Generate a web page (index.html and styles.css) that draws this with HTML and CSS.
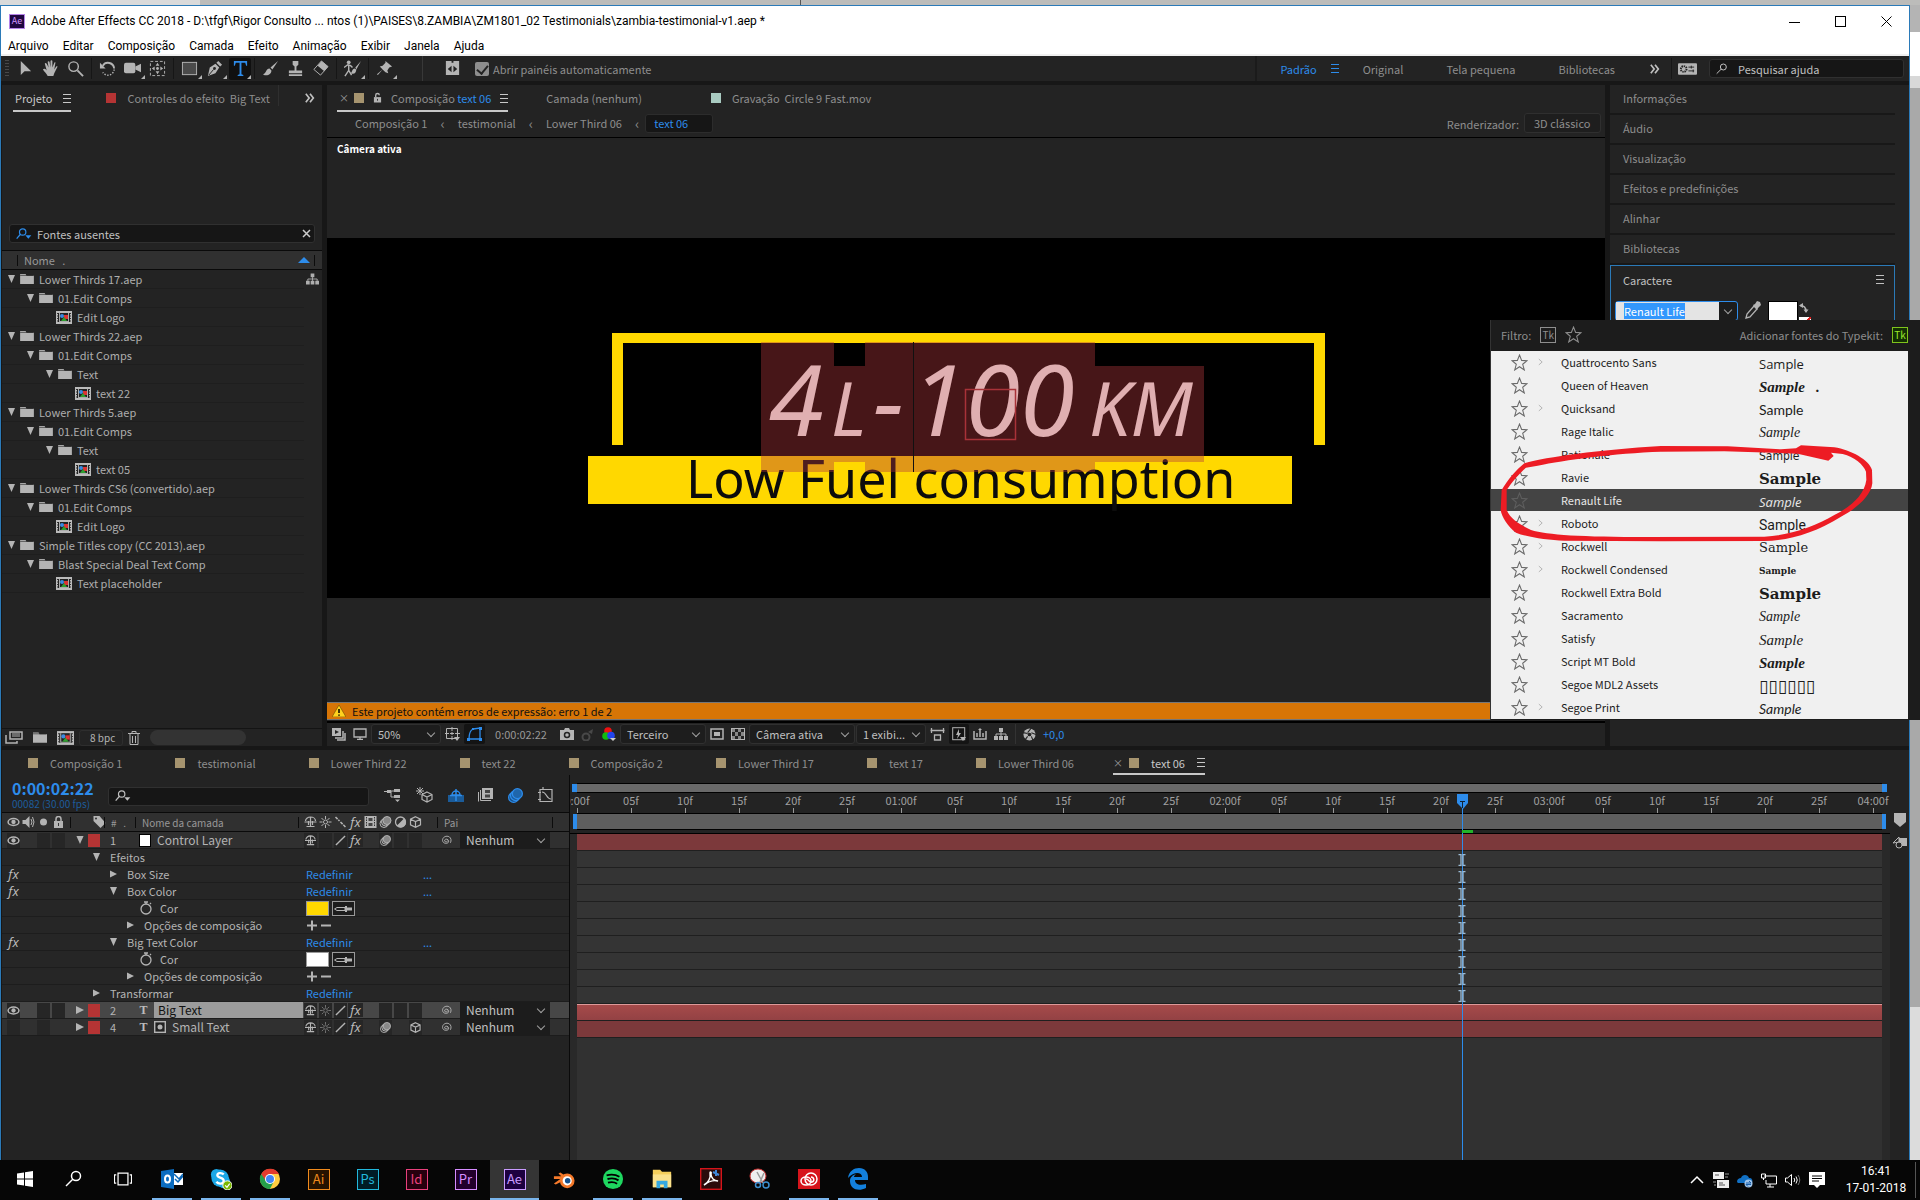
FILE: index.html
```html
<!DOCTYPE html>
<html lang="pt">
<head>
<meta charset="utf-8">
<title>Adobe After Effects CC 2018</title>
<link rel="stylesheet" href="styles.css">
</head>
<body>
<svg class="sprite" aria-hidden="true">
  <symbol id="arrow" viewBox="0 0 18 18"><path d="M4 1v15l4-4h7z" fill="currentColor"/></symbol>
  <symbol id="hand" viewBox="0 0 18 18"><path d="M6 17c-1-3-4-5-5-7 1-1 2-1 4 1L3 4c0-1 1-1 2 0l2 4-1-6c0-1 2-1 2 0l1 6V1c0-1 2-1 2 0v7l2-5c0-1 2-1 1 1l-1 6 2-3c1-1 2 0 1 1l-3 6-1 3z" fill="currentColor"/></symbol>
  <symbol id="lens" viewBox="0 0 18 18"><g fill="none" stroke="currentColor"><circle cx="7" cy="7" r="5" stroke-width="1.5"/><path d="M11 11l6 6" stroke-width="2"/></g></symbol>
  <symbol id="find" viewBox="0 0 18 18"><g fill="none" stroke="currentColor" stroke-width="1.5"><circle cx="11" cy="6" r="4.5"/><path d="M8 9l-7 7"/></g></symbol>
  <symbol id="findmenu" viewBox="0 0 24 18"><g fill="none" stroke="currentColor" stroke-width="1.8"><circle cx="10" cy="6" r="4.8"/><path d="M7 9l-6 7"/></g><path d="M14 11h9l-4.500 5z" fill="currentColor"/></symbol>
  <symbol id="rotate" viewBox="0 0 18 18"><path d="M4 6a6.500 6.500 0 0 1 12 3" fill="none" stroke="currentColor" stroke-width="2"/><path d="M16 10a6.500 6.500 0 0 1-12 3" fill="none" stroke="currentColor" stroke-dasharray="1.500 1.500" stroke-width="1.500"/><path d="M1 3v6h6z" fill="currentColor"/></symbol>
  <symbol id="cam" viewBox="0 0 18 18"><rect x="0" y="3" width="12" height="11" rx="2" fill="currentColor"/><path d="M12 7l6-3v9l-6-3z" fill="currentColor"/></symbol>
  <symbol id="pan" viewBox="0 0 18 18"><rect x="1.500" y="1.500" width="15" height="15" fill="none" stroke="currentColor" stroke-dasharray="3 2"/><path d="M9 3l2 3H7zM9 15l2-3H7zM3 9l3-2v4zM15 9l-3-2v4z" fill="currentColor"/><circle cx="9" cy="9" r="1.500" fill="currentColor"/></symbol>
  <symbol id="rect" viewBox="0 0 18 18"><rect x="1.500" y="2.500" width="15" height="13" fill="#4b4b4b" stroke="currentColor"/></symbol>
  <symbol id="pen" viewBox="0 0 18 18"><path d="M2 17l2-9 6-4 4 4-4 6zM11 3l2-2 4 4-2 2z" fill="currentColor"/><path d="M3 16l5-6" stroke="#232323"/><circle cx="9" cy="9" r="1.500" fill="#232323"/></symbol>
  <symbol id="type" viewBox="0 0 18 18"><path d="M2 1h14v5h-1l-1-3h-4v12l2 1v1H6v-1l2-1V3H4L3 6H2z" fill="currentColor"/></symbol>
  <symbol id="brush" viewBox="0 0 18 18"><path d="M17 1L9 8l2 2zM8 9c-4 0-3 5-7 6 4 3 9 0 9-4z" fill="currentColor"/></symbol>
  <symbol id="stamp" viewBox="0 0 18 18"><path d="M6 1h6v4l-2 2v4h6v3H2v-3h6V7L6 5zM2 15h14v2H2z" fill="currentColor"/></symbol>
  <symbol id="eraser" viewBox="0 0 18 18"><path d="M10 1l7 6-8 9-7-6z" fill="none" stroke="currentColor"/><path d="M10 1l7 6-4 5-7-6z" fill="currentColor"/></symbol>
  <symbol id="roto" viewBox="0 0 18 18"><circle cx="5" cy="2.500" r="2" fill="currentColor"/><path d="M0 8l4-3 3 1 2 2M5 6v5l-4 6M5 11l3 5" fill="none" stroke="currentColor" stroke-width="1.500"/><path d="M18 1l-6 7 1 2zM11 9c-3 1-2 4-4 5 4 2 6-1 6-4z" fill="currentColor"/></symbol>
  <symbol id="pin" viewBox="0 0 18 18"><path d="M10 1l7 6-3 1-2 3 1 3-3-1-3-3-5 6-1-1 6-5-3-3 3-1 3-3z" fill="currentColor"/></symbol>
  <symbol id="dock" viewBox="0 0 18 18"><path d="M2 1h6v2h2V1h6v15H2z" fill="currentColor"/><path d="M8 6v7L4 9.500zM10 6v7l4-3.500z" fill="#232323"/></symbol>
  <symbol id="more" viewBox="0 0 12 12"><path d="M1 1l4 5-4 5M6 1l4 5-4 5" fill="none" stroke="currentColor" stroke-width="2"/></symbol>
  <symbol id="burger" viewBox="0 0 8 9"><path d="M0 .5h8M0 4.500h8M0 8.500h8" stroke="currentColor"/></symbol>
  <symbol id="sync" viewBox="0 0 20 12"><rect width="20" height="12" rx="1" fill="currentColor"/><circle cx="6" cy="6" r="3" fill="none" stroke="#232323" stroke-width="2" stroke-dasharray="1.500 .8"/><path d="M11 4h6M14 2.500v3M11 8h6M16 6.500v3" stroke="#232323"/></symbol>
  <symbol id="openlock" viewBox="0 0 10 12"><path d="M1 5h8v6H1z" fill="currentColor"/><path d="M3 5V3a2 2 0 0 1 4 0" fill="none" stroke="currentColor" stroke-width="1.500"/><path d="M5 7v2" stroke="#232323"/></symbol>
  <symbol id="folder" viewBox="0 0 15 12"><path d="M0 0h6l1 2H0zM0 2h15v9H0z" fill="currentColor"/><path d="M0 1.500h14" stroke="#232323" stroke-width=".7"/></symbol>
  <symbol id="comp" viewBox="0 0 16 13"><rect x="1" y="1" width="14" height="11" fill="none" stroke="#bbb" stroke-width="2"/><path d="M1.500 2v10M14.500 2v10" stroke="#333" stroke-dasharray="1 1.500"/><rect x="3" y="2" width="10" height="9" fill="#aaa"/><rect x="4" y="2" width="8" height="8" fill="#222"/><circle cx="6" cy="5" r="2" fill="#3b8be0"/><rect x="8" y="4" width="4" height="4" fill="#d33"/><path d="M8 6l3 4H5z" fill="#2f9e2f"/></symbol>
  <symbol id="tree" viewBox="0 0 14 12"><path d="M5 0h4v4H5zM0 8h4v4H0zM5 8h4v4H5zM10 8h4v4h-4z" fill="currentColor"/><path d="M7 4v4M2 8V6h10v2" fill="none" stroke="currentColor"/></symbol>
  <symbol id="down" viewBox="0 0 8 9"><path d="M0 0h8L4 9z" fill="currentColor"/></symbol>
  <symbol id="right" viewBox="0 0 8 8"><path d="M0 0l8 4-8 4z" fill="currentColor"/></symbol>
  <symbol id="reels" viewBox="0 0 18 13"><path d="M5 1h12v7H5zM1 4v8h11v-2" fill="none" stroke="currentColor" stroke-width="1.500"/><path d="M7 3h8M7 5h8" stroke="currentColor"/></symbol>
  <symbol id="trash" viewBox="0 0 12 14"><path d="M0 2.500h12M4 2V.5h4V2M2 3v10.500h8V3M4.500 5v7M7.500 5v7" fill="none" stroke="currentColor"/></symbol>
  <symbol id="warn" viewBox="0 0 14 12"><path d="M7 0l7 12H0z" fill="#ffd21e" stroke="#6a4a00" stroke-width=".6"/><path d="M7 4v4M7 9.500v1.200" stroke="#000" stroke-width="1.500"/></symbol>
  <symbol id="views" viewBox="0 0 14 13"><path d="M0 0h9v8H0z" fill="currentColor"/><path d="M3 2l4 2-4 2z" fill="#232323"/><path d="M11 3v7H3M13 5v7H5" fill="none" stroke="currentColor" stroke-width="1.500"/></symbol>
  <symbol id="monitor" viewBox="0 0 14 12"><path d="M1 1h12v8H1zM7 9v2M4 11.500h6" fill="none" stroke="currentColor" stroke-width="1.300"/></symbol>
  <symbol id="grid" viewBox="0 0 15 14"><path d="M1.500 1.500h11v10h-11zM7 0v4M7 9v4M0 6.500h4M10 6.500h5M5 6.500h4M7 5v3" fill="none" stroke="currentColor"/><path d="M9 10h6l-3 4z" fill="currentColor"/></symbol>
  <symbol id="mask" viewBox="0 0 15 14"><path d="M2 12C2 6 4 3 6 2l7-1v11z" fill="none" stroke="currentColor" stroke-width="1.300"/><path d="M0 11h3v3H0zM12 11h3v3h-3zM5 1h2v2H5zM12 0h3v3h-3z" fill="currentColor"/></symbol>
  <symbol id="photo" viewBox="0 0 14 12"><path d="M0 2h4l1-2h4l1 2h4v10H0z" fill="currentColor"/><circle cx="7" cy="7" r="2.500" fill="none" stroke="#232323" stroke-width="1.500"/></symbol>
  <symbol id="ghost" viewBox="0 0 14 13"><circle cx="5" cy="9" r="3.500" fill="none" stroke="currentColor" stroke-width="2"/><path d="M7 4l5-3-1 5z" fill="currentColor"/></symbol>
  <symbol id="rgb" viewBox="0 0 14 14"><circle cx="6" cy="4" r="3.800" fill="#e11"/><circle cx="4" cy="9" r="3.800" fill="#1b1"/><circle cx="9" cy="8.500" r="3.800" fill="#24e"/><path d="M8 11h6l-3 3z" fill="#ccc"/></symbol>
  <symbol id="roi" viewBox="0 0 14 12"><rect x="1" y="1" width="12" height="10" fill="none" stroke="currentColor" stroke-width="1.500"/><path d="M4 4h6v4H4z" fill="currentColor"/></symbol>
  <symbol id="check" viewBox="0 0 14 12"><rect x=".5" y=".5" width="13" height="11" fill="none" stroke="currentColor"/><path d="M1 1h3v3H1zM7 1h3v3H7zM4 4h3v4H4zM10 4h3v4h-3zM1 8h3v3H1zM7 8h3v3H7z" fill="#888"/></symbol>
  <symbol id="aspect" viewBox="0 0 14 13"><path d="M0 2.500h14M1 0v5M13 0v5M4 7h6v5H4z" fill="none" stroke="currentColor" stroke-width="1.300"/></symbol>
  <symbol id="fast" viewBox="0 0 14 14"><rect x=".7" y=".7" width="12" height="12" fill="none" stroke="currentColor"/><path d="M7 2L4 8h2l-1 4 4-6H7zM8 10h6l-3 4z" fill="currentColor"/></symbol>
  <symbol id="tl" viewBox="0 0 14 12"><path d="M1 3v8h12V3M4 5v4M7 1v8M10 5v4" fill="none" stroke="currentColor" stroke-width="1.500"/><path d="M5 2h4L7 0z" fill="currentColor"/></symbol>
  <symbol id="aperture" viewBox="0 0 14 14"><circle cx="7" cy="7" r="6.500" fill="currentColor"/><path d="M5 5l4-5M9 5l5 2M9 9l2 5M5 9l-3 4M5 6L0 5" stroke="#232323" stroke-width="1.200"/><circle cx="7" cy="7" r="2" fill="#232323"/></symbol>
  <symbol id="eye" viewBox="0 0 12 10"><ellipse cx="6" cy="5" rx="5" ry="3.200" fill="none" stroke="currentColor" stroke-width="1.400"/><circle cx="6" cy="5" r="2" fill="currentColor"/></symbol>
  <symbol id="spk" viewBox="0 0 12 12"><path d="M0 4h3l4-4v12L3 8H0z" fill="currentColor"/><path d="M8.500 3q2 3 0 6M10 1q3 5 0 10" fill="none" stroke="currentColor"/></symbol>
  <symbol id="dot" viewBox="0 0 12 12"><circle cx="6" cy="6" r="3.500" fill="currentColor"/></symbol>
  <symbol id="lock" viewBox="0 0 12 12"><path d="M1.500 5h9v7h-9z" fill="currentColor"/><path d="M3.500 5V3a2.500 2.500 0 0 1 5 0v2" fill="none" stroke="currentColor" stroke-width="1.500"/><path d="M6 7v3" stroke="#333"/></symbol>
  <symbol id="tag" viewBox="0 0 12 12"><path d="M0 0h6l6 7-5 5-7-7z" fill="currentColor"/><circle cx="2.500" cy="2.500" r="1" fill="#333"/></symbol>
  <symbol id="shy" viewBox="0 0 12 12"><path d="M1 5a5 4 0 0 1 10 0M0 6h12M6 1v9M4 5v4M8 5v4M2 10.500h8" fill="none" stroke="currentColor" stroke-width="1.200"/></symbol>
  <symbol id="sun" viewBox="0 0 12 12"><circle cx="6" cy="6" r="2" fill="none" stroke="currentColor"/><path d="M6 0v3M6 9v3M0 6h3M9 6h3M2 2l2 2M8 8l2 2M10 2L8 4M2 10l2-2" stroke="currentColor"/></symbol>
  <symbol id="bslash" viewBox="0 0 12 12"><path d="M1 1l4 4M6 6l5 5" stroke="currentColor" stroke-width="1.500" stroke-dasharray="3 1"/></symbol>
  <symbol id="slash" viewBox="0 0 12 12"><path d="M1 11L11 1" stroke="currentColor" stroke-width="1.500"/></symbol>
  <symbol id="film" viewBox="0 0 12 12"><path d="M0 0h12v12H0z" fill="currentColor"/><path d="M2 1v10M10 1v10" stroke="#333" stroke-dasharray="1.500 1"/><path d="M4 2h4v3H4zM4 7h4v3H4z" fill="#444"/></symbol>
  <symbol id="blur" viewBox="0 0 12 12"><circle cx="4.500" cy="7.500" r="4" fill="none" stroke="currentColor"/><circle cx="6" cy="6" r="4" fill="#555" stroke="currentColor"/><circle cx="7.500" cy="4.500" r="4" fill="#888" stroke="currentColor"/></symbol>
  <symbol id="blurblue" viewBox="0 0 12 12"><circle cx="4.500" cy="7.500" r="4" fill="#174f86" stroke="#2d8ceb"/><circle cx="6" cy="6" r="4" fill="#1b5c9a" stroke="#2d8ceb"/><circle cx="7.500" cy="4.500" r="4" fill="#1f66ab" stroke="#2d8ceb"/></symbol>
  <symbol id="half" viewBox="0 0 12 12"><circle cx="6" cy="6" r="5" fill="none" stroke="currentColor" stroke-width="1.300"/><path d="M9.500 2.500a5 5 0 1 1-7 7z" fill="currentColor"/></symbol>
  <symbol id="cube" viewBox="0 0 12 12"><path d="M6 .7l5 2.500v5.600l-5 2.500-5-2.500V3.200zM1 3.200l5 2.300 5-2.300M6 5.500v6" fill="none" stroke="currentColor" stroke-width="1.200"/></symbol>
  <symbol id="swirl" viewBox="0 0 12 12"><path d="M7 6a1.500 1.500 0 1 1-2-1.300c2-.8 4 1 3.300 3C7 10 2 9.500 1.700 6 1.500 2 6 .3 9 2c2 1.300 2.500 4 1.300 6.500" fill="none" stroke="currentColor"/></symbol>
  <symbol id="watch" viewBox="0 0 12 14"><circle cx="6" cy="8" r="5" fill="none" stroke="currentColor" stroke-width="1.300"/><path d="M4 1h4M6 1v2M10 2l1 1" stroke="currentColor" stroke-width="1.300"/></symbol>
  <symbol id="dropper" viewBox="0 0 20 8"><path d="M.5 4L3 2.500h8v3H3z" fill="none" stroke="currentColor"/><path d="M11 1h2v1.500h5v3h-5V7h-2z" fill="currentColor"/></symbol>
  <symbol id="flow" viewBox="0 0 17 14"><path d="M0 3.500h7M7 3v6h3M7 3h3" stroke="currentColor" fill="none"/><path d="M3 2h4v3H3zM10 1h6v3h-6zM10 7h6v3h-6zM11 11.500h5l-2.500 2.500z" fill="currentColor"/></symbol>
  <symbol id="draft" viewBox="0 0 17 16"><path d="M4 0v8M0 4h8M1 1l6 6M7 1L1 7" stroke="currentColor"/><path d="M11 5l5 2.500v5L11 15l-5-2.500v-5zM6 7.500l5 2.500 5-2.500M11 10v5" fill="none" stroke="currentColor" stroke-width="1.200"/></symbol>
  <symbol id="blueshy" viewBox="0 0 16 14"><path d="M0 7h16v7H0z" fill="#1b5c9a"/><path d="M4 7a4 4 0 0 1 8 0zM8 1v12M2 7.500h12" fill="none" stroke="#2d8ceb" stroke-width="1.500"/></symbol>
  <symbol id="films" viewBox="0 0 15 14"><path d="M4 0h11v11H4z" fill="currentColor"/><path d="M2.500 2v10.500H13M.5 4v9.500" fill="none" stroke="currentColor"/><path d="M7 2h5v3H7zM7 6.500h5v3H7z" fill="#444"/></symbol>
  <symbol id="graph" viewBox="0 0 16 16"><path d="M2 2.500h12v12H2zM5 0v3M0 5.500h3M0 12.500h3M4 5c5 0 4 7 9 7" fill="none" stroke="currentColor" stroke-width="1.200"/></symbol>
  <symbol id="matte" viewBox="0 0 12 12"><rect x=".7" y=".7" width="10.600" height="10.600" fill="#222" stroke="currentColor" stroke-width="1.400"/><circle cx="6" cy="6" r="2.500" fill="currentColor"/></symbol>
  <symbol id="star" viewBox="0 0 16 16"><path d="M8 1l2 5 5 .3-4 3.400 1.500 5.300L8 12l-4.500 3L5 9.700 1 6.300 6 6z" fill="none" stroke="currentColor"/></symbol>
  <symbol id="chev" viewBox="0 0 6 8"><path d="M1 .5L5 4 1 7.500" fill="none" stroke="currentColor"/></symbol>
  <symbol id="ibeam" viewBox="0 0 8 12"><path d="M.5.5h2.500v11H.5M7.500.5H5v11h2.500" fill="none" stroke="currentColor" stroke-width="1.300"/></symbol>
  <symbol id="eyedrop" viewBox="0 0 16 18"><path d="M1 17l1-4 7-8 3 3-7 8z" fill="none" stroke="currentColor" stroke-width="1.300"/><path d="M8 4l2-1 2-3 3 1 1 3-3 3-1 2z" fill="currentColor"/></symbol>
  <symbol id="swap" viewBox="0 0 10 10"><path d="M1 2.500q6 0 6 6" fill="none" stroke="currentColor" stroke-width="1.500"/><path d="M4 0v5L0 2.500zM4.500 6.500h5L7 10z" fill="currentColor"/></symbol>
</svg>

<div class="desktop">
  <div class="strip"></div>
  <div class="window">
    <header class="titlebar">
      <span class="aelogo">Ae</span>
      <h1>Adobe After Effects CC 2018 - D:\tfgf\Rigor Consulto ... ntos (1)\PAISES\8.ZAMBIA\ZM1801_02 Testimonials\zambia-testimonial-v1.aep *</h1>
      <div class="winbtns">
        <button aria-label="Minimizar"><svg width="11" height="11"><path d="M0 6.500h11" stroke="#000"/></svg></button>
        <button aria-label="Maximizar"><svg width="11" height="11"><rect x=".5" y=".5" width="10" height="10" fill="none" stroke="#000"/></svg></button>
        <button aria-label="Fechar"><svg width="11" height="11"><path d="M.5.5l10 10M10.500.5l-10 10" stroke="#000"/></svg></button>
      </div>
    </header>
    <nav class="menubar"><button>Arquivo</button><button>Editar</button><button>Composição</button><button>Camada</button><button>Efeito</button><button>Animação</button><button>Exibir</button><button>Janela</button><button>Ajuda</button></nav>
    <div class="toolbar">
      <i class="grip"></i>
      <button aria-label="Seleção"><svg><use href="#arrow"/></svg></button><button aria-label="Mão"><svg><use href="#hand"/></svg></button><button aria-label="Zoom"><svg><use href="#lens"/></svg></button><i class="sep"></i>
      <button aria-label="Girar"><svg><use href="#rotate"/></svg></button><button class="fly" aria-label="Câmera"><svg><use href="#cam"/></svg></button><button aria-label="Panorâmica"><svg><use href="#pan"/></svg></button><i class="sep"></i>
      <button class="fly" aria-label="Retângulo"><svg><use href="#rect"/></svg></button><button class="fly" aria-label="Caneta"><svg><use href="#pen"/></svg></button><button class="fly on" aria-label="Texto"><svg><use href="#type"/></svg></button><i class="sep"></i>
      <button aria-label="Pincel"><svg><use href="#brush"/></svg></button><button aria-label="Carimbo"><svg><use href="#stamp"/></svg></button><button aria-label="Borracha"><svg><use href="#eraser"/></svg></button><i class="sep"></i>
      <button class="fly" aria-label="Roto"><svg><use href="#roto"/></svg></button><i class="sep"></i>
      <button class="fly" aria-label="Marionete"><svg><use href="#pin"/></svg></button><i class="sep wide"></i>
      <button aria-label="Painéis"><svg><use href="#dock"/></svg></button>
      <label class="auto"><input type="checkbox" checked> Abrir painéis automaticamente</label>
      <div class="spaces">
        <button class="blue">Padrão <svg class="burger"><use href="#burger"/></svg></button><button>Original</button><button>Tela pequena</button><button>Bibliotecas</button>
      </div>
      <button aria-label="Mais"><svg class="more"><use href="#more"/></svg></button><i class="sep end"></i>
      <button aria-label="Sincronizar" class="syncbtn"><svg><use href="#sync"/></svg></button>
      <label class="search help"><svg><use href="#find"/></svg><input type="text" value="Pesquisar ajuda" aria-label="Pesquisar ajuda"></label>
    </div>

    <main class="panels">
      <section class="panel project">
        <div class="tabs">
          <button class="tab on">Projeto <svg class="burger"><use href="#burger"/></svg></button>
          <button class="tab"><i class="sq red"></i>Controles do efeito&nbsp; Big Text</button>
          <i class="tabsep"></i>
          <svg class="more"><use href="#more"/></svg>
        </div>
        <label class="search missing"><svg class="fm"><use href="#findmenu"/></svg><input type="text" value="Fontes ausentes" aria-label="Pesquisar no projeto"><svg class="x" viewBox="0 0 9 9"><path d="M1 1l7 7M8 1L1 8" stroke="#ccc" stroke-width="1.500"/></svg></label>
        <div class="thead"><i class="bar"></i><span>Nome &nbsp; .</span><i class="up"></i><i class="bar"></i></div>
        <ul class="tree">
          <li class="l0"><svg class="tri"><use href="#down"/></svg><svg class="fo"><use href="#folder"/></svg>Lower Thirds 17.aep<svg class="flowbtn"><use href="#tree"/></svg></li>
          <li class="l1"><svg class="tri"><use href="#down"/></svg><svg class="fo"><use href="#folder"/></svg>01.Edit Comps</li>
          <li class="l2 leaf"><svg class="co"><use href="#comp"/></svg>Edit Logo</li>
          <li class="l0"><svg class="tri"><use href="#down"/></svg><svg class="fo"><use href="#folder"/></svg>Lower Thirds 22.aep</li>
          <li class="l1"><svg class="tri"><use href="#down"/></svg><svg class="fo"><use href="#folder"/></svg>01.Edit Comps</li>
          <li class="l2"><svg class="tri"><use href="#down"/></svg><svg class="fo"><use href="#folder"/></svg>Text</li>
          <li class="l3 leaf"><svg class="co"><use href="#comp"/></svg>text 22</li>
          <li class="l0"><svg class="tri"><use href="#down"/></svg><svg class="fo"><use href="#folder"/></svg>Lower Thirds 5.aep</li>
          <li class="l1"><svg class="tri"><use href="#down"/></svg><svg class="fo"><use href="#folder"/></svg>01.Edit Comps</li>
          <li class="l2"><svg class="tri"><use href="#down"/></svg><svg class="fo"><use href="#folder"/></svg>Text</li>
          <li class="l3 leaf"><svg class="co"><use href="#comp"/></svg>text 05</li>
          <li class="l0"><svg class="tri"><use href="#down"/></svg><svg class="fo"><use href="#folder"/></svg>Lower Thirds CS6 (convertido).aep</li>
          <li class="l1"><svg class="tri"><use href="#down"/></svg><svg class="fo"><use href="#folder"/></svg>01.Edit Comps</li>
          <li class="l2 leaf"><svg class="co"><use href="#comp"/></svg>Edit Logo</li>
          <li class="l0"><svg class="tri"><use href="#down"/></svg><svg class="fo"><use href="#folder"/></svg>Simple Titles copy (CC 2013).aep</li>
          <li class="l1"><svg class="tri"><use href="#down"/></svg><svg class="fo"><use href="#folder"/></svg>Blast Special Deal Text Comp</li>
          <li class="l2 leaf"><svg class="co"><use href="#comp"/></svg>Text placeholder</li>
        </ul>
        <div class="projfoot">
          <button aria-label="Interpretar"><svg width="18" height="13"><use href="#reels"/></svg></button>
          <button aria-label="Nova pasta"><svg width="14" height="12"><use href="#folder"/></svg></button>
          <button aria-label="Nova composição"><svg width="17" height="14"><use href="#comp"/></svg></button>
          <button class="bpc">8 bpc</button>
          <button aria-label="Excluir"><svg width="12" height="14"><use href="#trash"/></svg></button>
          <i class="hscroll"></i>
        </div>
      </section>

      <section class="panel viewer">
        <div class="tabs">
          <button class="tab on comptab"><span class="close">×</span><i class="sq"></i><svg class="lk"><use href="#openlock"/></svg><span class="dim">Composição <b>text 06</b></span><svg class="burger"><use href="#burger"/></svg></button>
          <button class="tab cam">Camada (nenhum)</button>
          <button class="tab rec"><i class="sq teal"></i>Gravação&nbsp; Circle 9 Fast.mov</button>
        </div>
        <div class="crumbs">
          <button>Composição 1</button><span>‹</span><button>testimonial</button><span>‹</span><button>Lower Third 06</button><span>‹</span><button class="here">text 06</button>
          <span class="rend">Renderizador:</span><button class="rbox">3D clássico</button>
        </div>
        <div class="stage">
          <div class="camlabel">Câmera ativa</div>
          <svg class="art" viewBox="0 0 1278 360" role="img" aria-label="4L-100KM Low Fuel consumption">
            <path d="M285 95h713v112h-11V105H296v102h-11z" fill="#ffd800"/>
            <path d="M261 218h704v48H261z" fill="#ffd800"/>
            <text class="low" x="359" y="260">Low Fuel consumption</text>
            <text class="big" x="442" y="198">4</text>
            <text class="big sm" x="504" y="198">L</text>
            <text class="big" x="546" y="198">-</text>
            <text class="big" x="584" y="198">100</text>
            <text class="big sm" x="762" y="198">KM</text>
            <path d="M434 104h73v24h31v-24h48v130h-48v-10h-31v10h-73zM587 104h181v24h109v96H768v10H587z" fill="#b2373c" fill-opacity=".4"/>
            <path d="M586.500 104v130" stroke="#111"/>
            <rect x="638.500" y="151.500" width="50" height="50" fill="none" stroke="#a83238" stroke-width="1.500"/>
          </svg>
          <div class="error"><svg width="14" height="12"><use href="#warn"/></svg>Este projeto contém erros de expressão: erro 1 de 2</div>
        </div>
        <div class="ctrl">
          <button aria-label="Visualizar"><svg width="14" height="13"><use href="#views"/></svg></button>
          <button aria-label="Monitor"><svg width="14" height="12"><use href="#monitor"/></svg></button>
          <span class="sel s70"><select aria-label="Ampliação"><option>50%</option></select></span>
          <button aria-label="Grade"><svg width="15" height="14"><use href="#grid"/></svg></button>
          <button aria-label="Máscara" class="dk blue"><svg width="15" height="14"><use href="#mask"/></svg></button>
          <span class="time">0:00:02:22</span>
          <button aria-label="Instantâneo"><svg width="14" height="12"><use href="#photo"/></svg></button>
          <button aria-label="Mostrar instantâneo" class="off"><svg width="14" height="13"><use href="#ghost"/></svg></button>
          <button aria-label="Canais"><svg width="14" height="14"><use href="#rgb"/></svg></button>
          <span class="sel s86"><select aria-label="Resolução"><option>Terceiro</option></select></span>
          <button aria-label="Região"><svg width="14" height="12"><use href="#roi"/></svg></button>
          <button aria-label="Transparência"><svg width="14" height="12"><use href="#check"/></svg></button>
          <span class="sel s106"><select aria-label="Exibição 3D"><option>Câmera ativa</option></select></span>
          <span class="sel s70"><select aria-label="Layout"><option>1 exibi...</option></select></span>
          <button aria-label="Proporção"><svg width="15" height="13"><use href="#aspect"/></svg></button>
          <button aria-label="Visualização rápida" class="dk"><svg width="14" height="14"><use href="#fast"/></svg></button>
          <button aria-label="Linha do tempo"><svg width="14" height="12"><use href="#tl"/></svg></button>
          <button aria-label="Fluxograma"><svg width="14" height="12"><use href="#tree"/></svg></button>
          <i class="cs"></i>
          <button aria-label="Exposição"><svg width="13" height="13"><use href="#aperture"/></svg></button>
          <span class="expo">+0,0</span>
        </div>
      </section>

      <aside class="side">
        <div class="acc">
          <button>Informações</button><button>Áudio</button><button>Visualização</button><button>Efeitos e predefinições</button><button>Alinhar</button><button>Bibliotecas</button>
        </div>
        <section class="char">
          <h2>Caractere <svg class="burger"><use href="#burger"/></svg></h2>
          <div class="fontrow">
            <label class="combo"><span class="edit"><mark>Renault Life</mark></span><i class="cv"></i></label>
            <svg width="16" height="18"><use href="#eyedrop"/></svg>
            <span class="fill"></span>
            <span class="swapcol"><svg width="10" height="10"><use href="#swap"/></svg><i class="none"></i></span>
          </div>
        </section>
      </aside>
    </main>

    <section class="timeline">
      <div class="ttabs">
        <button><i class="sq"></i>Composição 1</button><button><i class="sq"></i>testimonial</button><button><i class="sq"></i>Lower Third 22</button><button><i class="sq"></i>text 22</button><button><i class="sq"></i>Composição 2</button><button><i class="sq"></i>Lower Third 17</button><button><i class="sq"></i>text 17</button><button><i class="sq"></i>Lower Third 06</button>
        <button class="on"><span class="close">×</span><i class="sq"></i>text 06<svg class="burger"><use href="#burger"/></svg></button>
      </div>
      <div class="tbody">
        <div class="outline">
          <div class="otop">
            <div class="now"><strong>0:00:02:22</strong><small>00082 (30.00 fps)</small></div>
            <label class="search lsearch"><svg class="fm"><use href="#findmenu"/></svg><input type="text" aria-label="Pesquisar camadas"></label>
            <div class="oicons">
              <button aria-label="Minifluxograma"><svg width="17" height="14"><use href="#flow"/></svg></button>
              <button aria-label="Rascunho 3D"><svg width="17" height="16"><use href="#draft"/></svg></button>
              <button aria-label="Ocultar tímidas"><svg width="16" height="14"><use href="#blueshy"/></svg></button>
              <button aria-label="Mesclagem"><svg width="15" height="14"><use href="#films"/></svg></button>
              <button aria-label="Desfoque"><svg width="15" height="15"><use href="#blurblue"/></svg></button>
              <button aria-label="Gráfico"><svg width="16" height="16"><use href="#graph"/></svg></button>
            </div>
          </div>
          <div class="row head">
            <svg><use href="#eye"/></svg><svg><use href="#spk"/></svg><svg><use href="#dot"/></svg><svg><use href="#lock"/></svg><i class="bar"></i><svg><use href="#tag"/></svg><span class="bl"># &nbsp; .</span><span class="bl nm">Nome da camada</span>
            <svg><use href="#shy"/></svg><svg><use href="#sun"/></svg><svg><use href="#bslash"/></svg><em>fx</em><svg><use href="#film"/></svg><svg><use href="#blur"/></svg><svg><use href="#half"/></svg><svg><use href="#cube"/></svg><span class="bl pai">Pai</span>
          </div>
          <div class="row layer">
            <svg class="c"><use href="#eye"/></svg><i></i><i class="c"></i><i class="c"></i><svg class="tri"><use href="#down"/></svg><i class="lab"></i><span>1</span><span class="nm"><i class="solid"></i>Control Layer</span>
            <svg class="c"><use href="#shy"/></svg><i class="c"></i><svg class="c"><use href="#slash"/></svg><em class="c">fx</em><i></i><svg class="c"><use href="#blur"/></svg><i class="c"></i><i class="c"></i><svg class="sw"><use href="#swirl"/></svg><span class="sel"><select aria-label="Pai de Control Layer"><option>Nenhum</option></select></span>
          </div>
          <div class="prop d1"><span class="pn"><svg class="tri"><use href="#down"/></svg>Efeitos</span></div>
          <div class="prop d2"><em>fx</em><span class="pn"><svg class="tri"><use href="#right"/></svg>Box Size</span><a href="#">Redefinir</a><a href="#" class="el">...</a></div>
          <div class="prop d2"><em>fx</em><span class="pn"><svg class="tri"><use href="#down"/></svg>Box Color</span><a href="#">Redefinir</a><a href="#" class="el">...</a></div>
          <div class="prop d4"><span class="pn"><svg class="wt"><use href="#watch"/></svg>Cor</span><span class="val"><i class="chip gold"></i><i class="chip"><svg width="20" height="8"><use href="#dropper"/></svg></i></span></div>
          <div class="prop d3"><span class="pn"><svg class="tri"><use href="#right"/></svg>Opções de composição</span><span class="val pm"><svg width="28" height="11"><path d="M1 5.500h10M6 .5v10M15 5.500h10" stroke="#b4b4b4" stroke-width="2"/></svg></span></div>
          <div class="prop d2"><em>fx</em><span class="pn"><svg class="tri"><use href="#down"/></svg>Big Text Color</span><a href="#">Redefinir</a><a href="#" class="el">...</a></div>
          <div class="prop d4"><span class="pn"><svg class="wt"><use href="#watch"/></svg>Cor</span><span class="val"><i class="chip white"></i><i class="chip"><svg width="20" height="8"><use href="#dropper"/></svg></i></span></div>
          <div class="prop d3"><span class="pn"><svg class="tri"><use href="#right"/></svg>Opções de composição</span><span class="val pm"><svg width="28" height="11"><path d="M1 5.500h10M6 .5v10M15 5.500h10" stroke="#b4b4b4" stroke-width="2"/></svg></span></div>
          <div class="prop d1"><span class="pn"><svg class="tri"><use href="#right"/></svg>Transformar</span><a href="#">Redefinir</a></div>
          <div class="row layer picked">
            <svg class="c"><use href="#eye"/></svg><i></i><i class="c"></i><i class="c"></i><svg class="tri"><use href="#right"/></svg><i class="lab"></i><span>2</span><span class="nm"><b class="tt">T</b><span class="hl">Big Text</span></span>
            <svg class="c"><use href="#shy"/></svg><svg class="c fade"><use href="#sun"/></svg><svg class="c"><use href="#slash"/></svg><em class="c">fx</em><i></i><i class="c"></i><i class="c"></i><i class="c"></i><svg class="sw"><use href="#swirl"/></svg><span class="sel"><select aria-label="Pai de Big Text"><option>Nenhum</option></select></span>
          </div>
          <div class="row layer">
            <i class="c"></i><i></i><i class="c"></i><i></i><svg class="tri"><use href="#right"/></svg><i class="lab"></i><span>4</span><span class="nm"><b class="tt">T</b><svg class="mt"><use href="#matte"/></svg>Small Text</span>
            <svg class="c"><use href="#shy"/></svg><svg class="c fade"><use href="#sun"/></svg><svg class="c"><use href="#slash"/></svg><em class="c">fx</em><i></i><svg class="c"><use href="#blur"/></svg><i></i><svg class="c"><use href="#cube"/></svg><svg class="sw"><use href="#swirl"/></svg><span class="sel"><select aria-label="Pai de Small Text"><option>Nenhum</option></select></span>
          </div>
        </div>

        <div class="graph">
          <div class="nav"></div>
          <div class="ruler"><span class="s">0:00f</span><span>05f</span><span>10f</span><span>15f</span><span>20f</span><span>25f</span><span class="s">01:00f</span><span>05f</span><span>10f</span><span>15f</span><span>20f</span><span>25f</span><span class="s">02:00f</span><span>05f</span><span>10f</span><span>15f</span><span>20f</span><span>25f</span><span class="s">03:00f</span><span>05f</span><span>10f</span><span>15f</span><span>20f</span><span>25f</span><span class="s">04:00f</span></div>
          <div class="work"></div>
          <div class="cache"></div>
          <div class="lanes">
            <div class="lane red"></div><div class="lane"></div><div class="lane"></div><div class="lane"></div><div class="lane"></div><div class="lane"></div><div class="lane"></div><div class="lane"></div><div class="lane"></div><div class="lane"></div><div class="lane red sel2"></div><div class="lane red"></div>
          </div>
          <div class="play">
            <svg class="head-mark" viewBox="0 0 11 15"><path d="M0 0h11v9l-5 6-6-6z" fill="#2d8ceb"/><path d="M3 7.500h5M5.500 7v7" stroke="#123"/></svg>
            <i class="cached"></i>
            <div class="beams"><svg><use href="#ibeam"/></svg><svg><use href="#ibeam"/></svg><svg><use href="#ibeam"/></svg><svg><use href="#ibeam"/></svg><svg><use href="#ibeam"/></svg><svg><use href="#ibeam"/></svg><svg><use href="#ibeam"/></svg><svg><use href="#ibeam"/></svg><svg><use href="#ibeam"/></svg></div>
          </div>
        </div>
        <div class="edge">
          <svg width="12" height="14" viewBox="0 0 12 14"><path d="M0 0h12v9l-6 5-6-5z" fill="#b4b4b4"/></svg>
          <svg width="14" height="13" viewBox="0 0 14 13"><path d="M0 7l6-6v5z" fill="none" stroke="#b4b4b4"/><path d="M6 2h8v8H6z" fill="#b4b4b4"/><circle cx="6" cy="9" r="3" fill="#232323" stroke="#b4b4b4"/></svg>
        </div>
      </div>
    </section>
  </div>
  <div class="behind"><i class="b1"></i><i class="b2"></i><i class="b3"></i><i class="b4"></i><i class="b5"></i></div>

  <div class="fontmenu">
    <div class="ftop"><span>Filtro:</span><button class="tk">Tk</button><svg width="17" height="17"><use href="#star"/></svg><span class="add">Adicionar fontes do Typekit:</span><button class="tk lime">Tk</button></div>
    <ul>
      <li><svg class="st"><use href="#star"/></svg><svg class="cv2"><use href="#chev"/></svg><span>Quattrocento Sans</span><span class="f-sans">Sample</span></li>
      <li><svg class="st"><use href="#star"/></svg><span>Queen of Heaven</span><span class="f-script b">Sample &nbsp; .</span></li>
      <li><svg class="st"><use href="#star"/></svg><svg class="cv2"><use href="#chev"/></svg><span>Quicksand</span><span class="f-light">Sample</span></li>
      <li><svg class="st"><use href="#star"/></svg><span>Rage Italic</span><span class="f-script sm">Sample</span></li>
      <li><svg class="st"><use href="#star"/></svg><span>Rationale</span><span class="f-narrow">Sample</span></li>
      <li><svg class="st"><use href="#star"/></svg><span>Ravie</span><span class="f-fat">Sample</span></li>
      <li class="cur"><svg class="st"><use href="#star"/></svg><span>Renault Life</span><span class="f-sans it">Sample</span></li>
      <li><svg class="st"><use href="#star"/></svg><svg class="cv2"><use href="#chev"/></svg><span>Roboto</span><span class="f-rob">Sample</span></li>
      <li><svg class="st"><use href="#star"/></svg><svg class="cv2"><use href="#chev"/></svg><span>Rockwell</span><span class="f-slab">Sample</span></li>
      <li><svg class="st"><use href="#star"/></svg><svg class="cv2"><use href="#chev"/></svg><span>Rockwell Condensed</span><span class="f-cond">Sample</span></li>
      <li><svg class="st"><use href="#star"/></svg><span>Rockwell Extra Bold</span><span class="f-fat">Sample</span></li>
      <li><svg class="st"><use href="#star"/></svg><span>Sacramento</span><span class="f-script sm">Sample</span></li>
      <li><svg class="st"><use href="#star"/></svg><span>Satisfy</span><span class="f-script">Sample</span></li>
      <li><svg class="st"><use href="#star"/></svg><span>Script MT Bold</span><span class="f-script b">Sample</span></li>
      <li><svg class="st"><use href="#star"/></svg><span>Segoe MDL2 Assets</span><span class="f-box">▯▯▯▯▯▯</span></li>
      <li><svg class="st"><use href="#star"/></svg><svg class="cv2"><use href="#chev"/></svg><span>Segoe Print</span><span class="f-light it">Sample</span></li>
    </ul>
    <svg class="scrawl" viewBox="30 30 1290 1200" aria-hidden="true"><path fill="#ed1c24" fill-rule="evenodd" d="M945 415L960 406 1060 412C1110 420 1165 450 1173 480L1174 520C1170 560 1120 600 1080 620C1000 670 920 692 850 693L540 694 250 692C200 690 140 682 105 668C80 650 62 620 59 600L62 540C80 510 105 480 130 460C200 440 350 420 540 408L740 409 900 418ZM77 540L77 600C90 630 120 645 150 660C200 675 300 681 500 681L850 680C930 675 1000 650 1060 615C1110 590 1150 555 1156 510L1155 485C1148 465 1120 440 1085 432L1050 428 1058 438 1042 452 950 431 730 424 540 425C400 430 250 450 170 467L135 473C115 490 90 520 77 540Z"/></svg>
  </div>
</div>

<footer class="taskbar">
  <button aria-label="Iniciar"><svg viewBox="0 0 18 18"><path d="M1 3.500l7-1v6H1zM9 2.300L17 1v7.500H9zM1 9.500h7v6l-7-1zM9 9.500h8V17l-8-1.300z" fill="#fff"/></svg></button>
  <button aria-label="Pesquisar"><svg><use href="#find"/></svg></button>
  <button aria-label="Visão de tarefas"><svg viewBox="0 0 20 18"><path d="M4.500 2.500h11v13h-11zM2.500 4.500h-2v9h2M17.500 4.500h2v9h-2" fill="none" stroke="#fff" stroke-width="1.400"/></svg></button>
  <button aria-label="Outlook" class="run"><svg viewBox="0 0 22 22"><path d="M12 5h10v12H12z" fill="#fff"/><path d="M13 6l5 5 4-5M14 11l3 3 5-6" stroke="#0a66b7" stroke-width="1.500" fill="none"/><path d="M0 3l13-2v20L0 19z" fill="#0a6cc0"/><ellipse cx="6.500" cy="11" rx="2.500" ry="3.500" fill="none" stroke="#fff" stroke-width="2"/></svg></button>
  <button aria-label="Skype" class="run"><svg viewBox="0 0 24 24"><circle cx="7" cy="7" r="6" fill="#1ba7e6"/><circle cx="15" cy="15" r="7" fill="#1ba7e6"/><circle cx="11" cy="11" r="9.500" fill="#1ba7e6"/><path d="M15 7c-2-2-7-2-7 1s7 2 7 6-6 4-8 1" fill="none" stroke="#fff" stroke-width="2.500"/><circle cx="19" cy="19" r="5" fill="#7ab800" stroke="#fff"/><path d="M16.500 19l2 2 3-4" stroke="#fff" fill="none" stroke-width="1.300"/></svg></button>
  <button aria-label="Chrome" class="run"><svg viewBox="0 0 22 22"><circle cx="11" cy="11" r="10" fill="#ffcd40"/><path d="M11 11L2.300 6A10 10 0 0 0 11 21l4-8z" fill="#25a04b"/><path d="M11 6h9A10 10 0 0 0 2.300 6L7 13z" fill="#e33b2e"/><circle cx="11" cy="11" r="5" fill="#fff"/><circle cx="11" cy="11" r="4" fill="#4285f4"/></svg></button>
  <button aria-label="Illustrator"><span class="app ai">Ai</span></button>
  <button aria-label="Photoshop"><span class="app ps">Ps</span></button>
  <button aria-label="InDesign"><span class="app id">Id</span></button>
  <button aria-label="Premiere"><span class="app pr">Pr</span></button>
  <button aria-label="After Effects" class="run active"><span class="app ae">Ae</span></button>
  <button aria-label="Blender"><svg viewBox="0 0 24 22"><path d="M1 8h8L6 5l2-1 8 5-1 2-12 6-2-1 7-5H1z" fill="#f5792a"/><circle cx="15.500" cy="13" r="8" fill="#f5792a"/><circle cx="15.500" cy="13" r="5" fill="#fff"/><circle cx="16" cy="13" r="3" fill="#17518c"/></svg></button>
  <button aria-label="Spotify" class="run"><svg viewBox="0 0 24 24"><circle cx="12" cy="12" r="11" fill="#1ed760"/><path d="M5 8q8-2 14 1.500M6 12q7-2 12 1.500M6.500 16q6-1.500 10 1.200" stroke="#000" stroke-width="2" fill="none"/></svg></button>
  <button aria-label="Explorador" class="run"><svg viewBox="0 0 24 22"><path d="M2 1h8l2 2h10v17H2z" fill="#f5cf5c"/><path d="M2 6h20v14H2z" fill="#fbe28d"/><path d="M6 21v-8h12v8h-4v-4h-4v4z" fill="#35a8e0"/></svg></button>
  <button aria-label="Acrobat"><svg viewBox="0 0 22 22"><rect x=".7" y=".7" width="20.600" height="20.600" fill="#2a0b0b" stroke="#d4141a" stroke-width="1.400"/><path d="M4 17c4-2 7-7 6-12 0-2 2-1 1 1 0 4 3 7 7 7-4-1-9 0-14 4z" fill="none" stroke="#fff" stroke-width="1.400"/><path d="M13 4l6 3M16 2v6" stroke="#3f86d8" stroke-width="2"/></svg></button>
  <button aria-label="Captura"><svg viewBox="0 0 22 22"><ellipse cx="9" cy="8" rx="8" ry="7" fill="#eee" stroke="#c33"/><path d="M8 4l6 11M15 5l-4 9" stroke="#999" stroke-width="1.500"/><circle cx="9" cy="17" r="2.500" fill="none" stroke="#3c8fd0" stroke-width="1.500"/><circle cx="17" cy="17" r="3" fill="none" stroke="#3c8fd0" stroke-width="1.500"/></svg></button>
  <button aria-label="Creative Cloud" class="run"><svg viewBox="0 0 22 22"><path d="M0 1h22v20H0z" fill="#d6141b"/><ellipse cx="8" cy="13" rx="5" ry="4" fill="none" stroke="#fff" stroke-width="1.500"/><circle cx="13" cy="11" r="6" fill="none" stroke="#fff" stroke-width="1.500"/><path d="M8 11c3 0 3 4 6 3s2-5-1-5" fill="none" stroke="#fff" stroke-width="1.500"/></svg></button>
  <button aria-label="Edge" class="run"><svg viewBox="0 0 22 22"><path d="M1 10C2 3 7 0 12 0c6 0 9 4 9 9v3H8c0 4 4 6 11 4v4c-8 4-16 1-16-7 0-4 3-6 6-7-1 1-2 2-2 3h8c0-5-8-6-14 1z" fill="#1380dc"/></svg></button>
  <div class="tray">
    <svg viewBox="0 0 16 16"><path d="M2 11l6-6 6 6" fill="none" stroke="#fff" stroke-width="1.500"/></svg>
    <svg viewBox="0 0 16 16"><path d="M0 0h11v7H0zM4 8h12v8H4z" fill="#eee"/><path d="M6 11h4M6 13h6M2 3h4" stroke="#555"/><path d="M12 2h4M12 5h3M0 10h3M1 13h2" stroke="#999"/></svg>
    <svg viewBox="0 0 16 16"><path d="M0 10c0-3 2-4 4-4 1-4 7-4 8 0 3 0 4 2 3 5H1z" fill="#1170c4"/><circle cx="11.500" cy="11.500" r="4" fill="#9fc4ea"/><path d="M9 11h5l-2-2M14 12.500H9l2 2" stroke="#1a5fa8" fill="none"/></svg>
    <svg viewBox="0 0 16 16"><path d="M3 4h12.500v8H5V8M9 12v3M6 15h7M.5 2h4v4h-4zM2.500 6v2" fill="none" stroke="#fff"/></svg>
    <svg viewBox="0 0 16 16"><path d="M.5 6h2l4-3.500v11L2.500 10h-2z" fill="none" stroke="#fff"/><path d="M9 6q1.500 2 0 4M11 4.500q2.500 3.500 0 7" fill="none" stroke="#fff"/><path d="M13 3q3.500 5 0 10" fill="none" stroke="#777"/></svg>
    <svg viewBox="0 0 16 16"><path d="M0 0h16v13h-5l-3 3-3-3H0z" fill="#fff"/><path d="M3 4h10M3 6.500h10M3 9h7" stroke="#000"/></svg>
    <time>16:41<br>17-01-2018</time>
    <i class="peek"></i>
  </div>
</footer>
</body>
</html>
```
FILE: styles.css
```css
* { box-sizing: border-box; }
body {
  margin: 0; min-height: 100vh; display: flex; flex-direction: column;
  background: #060606; color: #a0a0a0;
  font: 11px/16px "Noto Sans CJK SC", "Open Sans", sans-serif;
}
button, input, select { font: inherit; color: inherit; background: none; border: 0; padding: 0; margin: 0; }
button { display: inline-flex; align-items: center; white-space: nowrap; }
input, select { outline: 0; min-width: 0; }
ul { list-style: none; margin: 0; padding: 0; }
h1, h2 { font: inherit; margin: 0; }
a { text-decoration: none; color: #2d8ceb; }
svg { flex: none; display: block; }
.sprite { position: absolute; width: 0; height: 0; }
.blue, .expo { color: #2d8ceb; }

.desktop { position: relative; flex: 1; display: grid; grid-template: 5px 1fr / 1fr 10px; }
.strip { grid-column: 1 / 3; background: linear-gradient(90deg, #dadada 200px, #bcbcba 200px 800px, #555 800px 801px, #bcbcba 801px); }
.window { display: flex; flex-direction: column; border: 1px solid #2b7ab8; border-bottom: 0; background: #171717; min-width: 0; }
.behind { display: flex; flex-direction: column; background: #b9b9b9; }
.b1 { height: 27px; background: #b4b4b4; }
.b2 { height: 44px; background: #fff; }
.b3 { height: 12px; background: #d8d8d8; }
.b4 { flex: 1; background: #a9a9a9; }
.b5 { height: 153px; background: #dcdcdc; }

/* title and menu */
.titlebar { display: flex; align-items: center; gap: 6px; height: 30px; padding-left: 8px; background: #fff; color: #000; font: 12px/16px Roboto, sans-serif; }
.aelogo { width: 16px; height: 15px; background: #1f0740; border: 1px solid #b583e8; color: #cf96fd; font: 9px/12px "Noto Sans CJK SC", sans-serif; text-align: center; }
.titlebar h1 { flex: 1; white-space: nowrap; overflow: hidden; }
.winbtns { display: flex; }
.winbtns button { width: 46px; justify-content: center; }
.menubar { display: flex; gap: 14px; height: 20px; padding: 2px 0 0 7px; background: #fff; border-bottom: 2px solid #f0f0f0; color: #000; font: 12px/16px Roboto, sans-serif; }

/* toolbar */
.toolbar { display: flex; align-items: center; height: 25px; background: #232323; color: #b4b4b4; padding-right: 5px; }
.toolbar > button { width: 25px; height: 22px; justify-content: center; position: relative; }
.toolbar > button svg { width: 17px; height: 17px; }
.toolbar .on { background: #101010; color: #2d8ceb; border-radius: 2px; width: 22px; margin-left: 2px; }
.fly::after { content: ""; position: absolute; right: 0; bottom: 1px; border: 2px solid; border-color: transparent #b4b4b4 #b4b4b4 transparent; }
.grip { width: 4px; height: 18px; margin: 0 4px 0 4px; background: repeating-linear-gradient(#484848 0 1px, #232323 1px 3px); }
.sep { width: 1px; height: 21px; background: #161616; margin: 0 3px; }
.sep.wide { background: #383838; margin: 0 17px 0 25px; height: 25px; }
.auto { display: flex; align-items: center; gap: 4px; margin-left: 10px; color: #8e8e8e; }
.auto input { appearance: none; width: 14px; height: 14px; border-radius: 2px; background: #8e8e8e; position: relative; }
.auto input::after { content: ""; position: absolute; left: 4px; top: 1px; width: 5px; height: 9px; border: solid #232323; border-width: 0 2px 2px 0; transform: rotate(40deg); }
.spaces { display: flex; margin-left: auto; border-left: 2px solid #1b1b1b; height: 25px; padding: 0 27px 0 23px; color: #8e8e8e; }
.spaces .blue { color: #2d8ceb; }
.spaces button { margin-right: 43px; }
.spaces button:nth-child(1) { margin-right: 24px; gap: 14px; }
.spaces button:last-child { margin-right: 0; }
.burger { width: 8px; height: 9px; }
.toolbar > button .more, .more { width: 12px; height: 10px; color: #c0c0c0; }
.sep.end { margin: 0 5px 0 4px; }
.toolbar > .syncbtn { width: 20px; margin-right: 12px; }
.toolbar > .syncbtn svg { width: 19px; height: 12px; }
.search { display: flex; align-items: center; background: #161616; border: 1px solid #303030; border-radius: 3px; height: 19px; padding: 0 6px; color: #c0c0c0; }
.search svg { width: 12px; height: 12px; }
.search .fm { width: 16px; }
.search input { flex: 1; }
.help { width: 195px; gap: 10px; }

/* panels */
.panels { flex: 661 0 0; display: grid; grid-template-columns: 320px 1fr 299px; gap: 5px; padding: 4px 0 4px 1px; min-height: 0; }
.panel, .side { background: #232323; min-width: 0; }
.panel { display: flex; flex-direction: column; }
.tabs { display: flex; height: 27px; align-items: stretch; color: #8e8e8e; }
.tab { gap: 11px; border-bottom: 2px solid transparent; padding-top: 1px; }
.tab.on { border-color: #c8c8c8; color: #c8c8c8; padding-left: 2px; }
.sq { width: 10px; height: 10px; background: #a6946f; flex: none; }
.sq.red { background: #b53434; } .sq.teal { background: #a9cbc1; }
.project .tabs { padding-left: 11px; gap: 35px; }
.project .tabs .more { margin: 8px 0 0 -10px; }
.tabsep { width: 1px; background: #2f2f2f; margin-left: -27px; height: 21px; }
.missing { margin: 112px 7px 7px 7px; gap: 5px; padding-right: 3px; }
.missing .fm { color: #2d8ceb; }
.search svg.x { width: 9px; height: 9px; }
.thead { display: flex; align-items: center; height: 20px; border: solid #0a0a0a; border-width: 1px 0; background: #303030; padding-left: 15px; color: #989898; }
.thead span { flex: 1; }
.thead .bar:first-child { margin-right: 6px; }
.up { border: 6px solid transparent; border-bottom-color: #2d8ceb; border-top: 0; margin-right: 4px; }
.bar { width: 1px; height: 11px; background: #0c0c0c; margin-right: 7px; }
.tree { flex: 1; color: #aeaeae; }
.tree li { display: flex; align-items: center; height: 19px; gap: 5px; border-bottom: 1px solid #1e1e1e; margin-right: 18px; position: relative; white-space: nowrap; }
.l0 { padding-left: 6px; } .l1 { padding-left: 25px; } .l2 { padding-left: 44px; } .l3 { padding-left: 63px; }
.leaf.l2 { padding-left: 54px; } .leaf.l3 { padding-left: 73px; }
.tri { width: 7px; height: 8px; color: #b4b4b4; }
.fo { width: 14px; height: 11px; color: #b4b4b4; }
.co { width: 16px; height: 13px; }
.flowbtn { width: 13px; height: 12px; position: absolute; right: -15px; }
.projfoot { display: flex; align-items: center; gap: 10px; height: 18px; padding-left: 3px; border-top: 1px solid #141414; color: #b4b4b4; }
.bpc { border: 1px solid #2e2e2e; border-radius: 3px; width: 44px; height: 16px; padding-left: 10px; font-size: 10px; margin: 0 -5px 0 -5px; }
.hscroll { width: 96px; height: 15px; border-radius: 8px; background: #333; }

/* viewer */
.viewer .tabs { padding-left: 10px; }
.comptab { gap: 9px; }
.close { font-size: 10px; color: #999; width: 6px; }
.comptab .dim { color: #8e8e8e; }
.comptab b { font-weight: 400; color: #2d8ceb; }
.lk { width: 9px; height: 12px; color: #b4b4b4; }
.cam { margin-left: 38px; } .rec { margin-left: 69px; }
.crumbs { display: flex; align-items: center; height: 26px; padding: 0 4px 3px 28px; border-bottom: 1px solid #000; color: #8e8e8e; gap: 13px; }
.crumbs span { font-size: 14px; }
.crumbs .here { width: 68px; height: 19px; padding-left: 8px; background: #161616; border: 1px solid #2c2c2c; border-radius: 3px; color: #2d8ceb; margin-left: -7px; }
.crumbs .rend { margin: 2px -8px 0 auto; font-size: 11px; }
.rbox { width: 77px; height: 20px; padding-left: 9px; border: 1px solid #2f2f2f; border-radius: 3px; background: #1e1e1e; }
.stage { flex: 1; display: flex; flex-direction: column; }
.camlabel { color: #fff; font: bold 10px/16px "Noto Sans CJK SC", sans-serif; padding: 3px 0 0 10px; height: 100px; }
.art { display: block; width: 100%; background: #000; }
.art text { fill: #fff; }
.art .low { fill: #0c0c0c; font: 52px "Noto Sans", sans-serif; }
.art .big { font: italic 99px "Noto Sans", sans-serif; }
.art .sm { font-size: 74px; }
.error { display: flex; align-items: center; gap: 6px; height: 18px; margin-top: auto; padding-left: 5px; background: #d77506; border: solid #777; border-width: 1px 0; color: #111; margin-bottom: 1px; }
.ctrl { display: flex; align-items: center; gap: 7px; height: 25px; border-top: 2px solid #000; padding: 0 0 1px 5px; color: #b4b4b4; }
.ctrl .sel { margin: 0 -3px; }
.dk { background: #141414; border-radius: 2px; height: 20px; padding: 0 3px; margin: 0 -3px; }
.dk.blue { color: #2d8ceb; }
.off { color: #484848; }
.time { width: 64px; text-align: center; color: #989898; }
.sel { position: relative; display: block; height: 20px; }
.ctrl .sel { border: 1px solid #303030; background: #1d1d1d; border-radius: 3px; }
.sel select { appearance: none; width: 100%; height: 100%; padding-left: 6px; color: #c0c0c0; display: block; }
.sel::after, .cv::after { content: ""; position: absolute; right: 6px; top: 5px; width: 5px; height: 5px; border: solid #a0a0a0; border-width: 0 1px 1px 0; transform: rotate(45deg); }
.s70 { width: 70px; } .s86 { width: 86px; } .s106 { width: 106px; }
.cs { width: 1px; height: 20px; background: #333; }

/* side */
.acc { display: flex; flex-direction: column; margin-right: 14px; }
.acc button { height: 30px; padding: 0 0 2px 13px; border-bottom: 2px solid #181818; color: #8e8e8e; }
.char { border: 1px solid #2b7ab8; margin-right: 14px; height: 400px; }
.char h2 { display: flex; justify-content: space-between; align-items: center; padding: 0 10px 0 12px; height: 27px; color: #c0c0c0; }
.fontrow { display: flex; align-items: flex-start; gap: 7px; padding: 8px 0 0 4px; color: #b4b4b4; }
.combo { position: relative; width: 123px; height: 20px; border: 1px solid #2d8ceb; border-radius: 3px; padding-right: 18px; background: #1c1c1c; }
.edit { display: block; height: 18px; padding: 1px 8px; background: #e4e4e4; }
.edit mark { background: #3297fd; color: #fff; display: inline-block; }
.fill { width: 30px; height: 25px; background: #fff; border: 1px solid #000; }
.swapcol { margin: 2px 0 0 -6px; }
.none { display: block; width: 12px; height: 12px; background: linear-gradient(135deg, #fff 45%, #d22 45% 55%, #fff 55%); margin-top: 4px; }

/* font menu */
.fontmenu { position: absolute; right: 0; top: 320px; width: 430px; padding: 0 12px 1px 0; background: #1c1c1c; border-left: 1px solid #333; }
.ftop { display: flex; align-items: center; height: 31px; gap: 9px; padding: 0 0 2px 10px; color: #8e8e8e; }
.ftop .add { margin-left: auto; }
.tk { width: 16px; height: 16px; border: 1px solid #8e8e8e; justify-content: center; font-size: 10px; }
.tk.lime { border-color: #7fc41c; color: #9be82c; background: #143004; }
.fontmenu ul { background: #f0f0f0; color: #1c1c1c; }
.fontmenu li { display: grid; grid-template-columns: 27px 23px 198px 1fr; align-items: center; height: 23px; padding: 0 0 2px 20px; white-space: nowrap; }
.fontmenu li > span:nth-last-child(2) { grid-column: 3; }
.fontmenu li > span:last-child { grid-column: 4; padding-top: 4px; }
.st { width: 17px; height: 17px; color: #6a6a6a; }
.cv2 { width: 5px; height: 8px; color: #aaa; }
.fontmenu .cur { background: linear-gradient(#444 22px, #f0f0f0 22px); color: #e8e8e8; }
.cur .st { color: #5e5e5e; }
.f-sans { font: 13px/18px "Open Sans", sans-serif; }
.f-light { font: 14px/18px Lato, sans-serif; }
.f-rob { font: 14px/18px Roboto, sans-serif; }
.f-narrow { font: 12px/18px "Liberation Sans Narrow", "DejaVu Sans Condensed", sans-serif; }
.f-slab { font: 13px/18px "DejaVu Serif", serif; }
.f-cond { font: bold 10px/18px "DejaVu Serif Condensed", "Liberation Serif", serif; }
.f-fat { font: bold 15px/18px "DejaVu Serif", serif; }
.f-script { font: italic 15px/18px "Liberation Serif", serif; }
.f-box { font: 17px/18px "DejaVu Sans", sans-serif; }
.it { font-style: italic; } .b { font-weight: bold; } .f-script.sm { font-size: 14px; }
.scrawl { position: absolute; left: 0; top: 0; width: 430px; height: 400px; }

/* timeline */
.timeline { flex: 410 0 0; background: #232323; display: flex; flex-direction: column; border-left: 1px solid #171717; }
.ttabs { display: flex; height: 25px; padding-left: 26px; gap: 53px; color: #8e8e8e; }
.ttabs button { gap: 12px; border-bottom: 2px solid transparent; padding-top: 2px; }
.ttabs .on { border-color: #c8c8c8; color: #c8c8c8; margin-left: -14px; }
.ttabs .close { margin-right: -2px; }
.tbody { flex: 1; display: grid; grid-template-columns: 568px 1fr 19px; }
.outline { border-right: 1px solid #0a0a0a; color: #b4b4b4; padding-top: 3px; }
.otop { display: flex; align-items: center; height: 34px; padding-left: 10px; }
.now { width: 96px; color: #2d8ceb; display: flex; flex-direction: column; }
.now strong { font-size: 16px; line-height: 17px; }
.now small { font-size: 10px; line-height: 14px; color: #1d5c9b; white-space: nowrap; }
.lsearch { width: 261px; margin-top: 2px; }
.oicons { display: flex; flex: 1; justify-content: space-between; padding: 0 15px 0 15px; align-items: center; }
.row { display: grid; grid-template-columns: repeat(4, 15px) 22px 22px 26px 1fr repeat(8, 15px) 37px 90px 19px; align-items: center; height: 17px; padding-left: 4px; border-bottom: 1px solid #1c1c1c; background: #303030; white-space: nowrap; }
.row > svg { width: 11px; height: 11px; justify-self: center; }
.row em, .prop em { font: italic 13px/14px "Open Sans", sans-serif; text-align: center; color: #c0c0c0; }
.head { height: 20px; border: solid #0a0a0a; border-width: 1px 0; color: #b4b4b4; }
.row.head > svg { width: 13px; height: 12px; }
.head .bar { margin: 0 auto 0 4px; }
.bl { border-left: 1px solid #0c0c0c; line-height: 11px; padding-left: 6px; margin-left: -6px; color: #989898; font-size: 10px; }
.bl.nm { margin-left: -1px; border-right: 1px solid #0c0c0c; margin-right: 4px; }
.bl.pai { grid-column: 17 / 19; margin-left: 14px; border-right: 1px solid #0c0c0c; margin-right: -3px; }
.row .nm { display: flex; align-items: center; }
.row.layer .nm { gap: 6px; padding-left: 3px; height: 16px; font-size: 12px; }
.layer .c { background: #262626; }
.layer > svg.c { width: 13px; height: 15px; padding: 2px 0; }
.layer > i.c { width: 13px; height: 15px; justify-self: center; }
.row.layer > .tri { width: 8px; height: 8px; margin-left: 5px; }
.fade { color: #777; }
.lab { width: 12px; height: 13px; background: #b53434; }
.solid { width: 12px; height: 13px; background: #fff; border: 1px solid #000; }
.tt { width: 9px; font: bold 12px/16px "Liberation Serif", serif; text-align: center; color: #bbb; }
.mt { width: 12px; height: 12px; }
.picked { background: #474747; }
.hl { flex: 1; background: #9c9c9c; color: #111; padding-left: 4px; height: 16px; line-height: 16px; }
.layer .sw { margin-left: 9px; }
.layer .sel { height: 16px; background: #1c1c1c; }
.layer .sel::after { top: 4px; }
.layer select { font-size: 12px; line-height: 16px; }
.prop { display: grid; grid-template-columns: 15px 1fr 117px 146px; align-items: center; height: 17px; padding-left: 4px; background: #262626; border-bottom: 1px solid #1d1d1d; }
.prop em { grid-column: 1; }
.pn { grid-column: 2; display: flex; align-items: center; gap: 10px; }
.d1 .pn { padding-left: 72px; } .d2 .pn { padding-left: 89px; } .d3 .pn { padding-left: 106px; } .d4 .pn { padding-left: 119px; }
.prop a, .val { grid-column: 3; }
.prop .el { grid-column: 4; }
.wt { width: 12px; height: 14px; margin-right: -2px; }
.val { display: flex; gap: 3px; }
.chip { width: 23px; height: 15px; border: 1px solid #999; padding: 3px 1px; background: #1c1c1c; }
.chip.gold { background: #ffd800; } .chip.white { background: #fff; }

.graph { position: relative; overflow: hidden; background: #232323; padding-top: 8px; display: flex; flex-direction: column; }
.nav { height: 10px; background: #696969; border: solid #000; border-width: 1px 0; margin: 0 8px 0 7px; box-shadow: -6px 0 0 -1px #2d8ceb, 6px 0 0 -1px #2d8ceb; }
.ruler { display: flex; height: 20px; margin: 0 -10px 0 -20px; color: #a0a0a0; }
.ruler span { flex: 1 0 0; text-align: center; line-height: 15px; }
.ruler span::after { content: ""; display: block; width: 1px; height: 5px; background: #999; margin: 0 auto; }
.work { height: 17px; background: #5e5e5e; border: solid #000; border-width: 1px 0; margin: 0 8px 0 7px; box-shadow: -5px 0 0 -1px #2d8ceb, 5px 0 0 -1px #2d8ceb; }
.cache { height: 4px; border-bottom: 1px solid #000; }
.lanes { flex: 1; background: #313131; border: solid #292929; border-width: 0 8px 0 7px; }
.lane { height: 17px; border-bottom: 1px solid #1f1f1f; background: #343434; }
.lane.red { background: #7c393b; }
.lane.sel2 { background: linear-gradient(#a64a4a, #934244); border-top: 1px solid #d99; }
.play { position: absolute; top: 19px; bottom: 0; left: 67.6%; width: 1px; background: #2d8ceb; }
.head-mark { position: absolute; left: -5px; top: 0; width: 11px; height: 15px; }
.cached { position: absolute; left: 0; top: 36px; width: 11px; height: 3px; background: #22b42a; }
.beams { position: absolute; left: -4px; top: 57px; display: grid; grid-auto-rows: 17px; align-items: center; color: #9cbcd6; }
.beams svg { width: 8px; height: 12px; }
.edge { padding-top: 38px; display: flex; flex-direction: column; gap: 9px; align-items: center; }

/* taskbar */
.taskbar { display: flex; height: 40px; background: #060606; color: #fff; }
.taskbar button { width: 49px; justify-content: center; border-bottom: 2px solid transparent; }
.taskbar button svg { width: 22px; height: 22px; }
.taskbar button:nth-child(-n+3) svg { width: 18px; height: 18px; }
.taskbar .run { background: linear-gradient(#7ab5ec, #7ab5ec) 50% 100% / 40px 2px no-repeat border-box; }
.taskbar .active { background-color: #353535; background-size: 49px 2px; }
.app { width: 22px; height: 21px; border: 1px solid; font: 13px/18px "Noto Sans CJK SC", sans-serif; text-align: center; }
.ai { color: #f08a1c; background: #261300; } .ps { color: #22b8dc; background: #001c26; } .id { color: #e8407c; background: #26000e; } .pr { color: #d58cff; background: #22002c; } .ae { color: #c99bff; background: #1d0040; }
.tray { margin-left: auto; display: flex; align-items: center; gap: 8px; }
.tray > svg { width: 16px; height: 16px; }
.tray time { font: 12px/17px Roboto, sans-serif; text-align: center; width: 86px; white-space: nowrap; }
.peek { width: 1px; height: 36px; background: #555; margin: 0 4px 0 -12px; }
```
